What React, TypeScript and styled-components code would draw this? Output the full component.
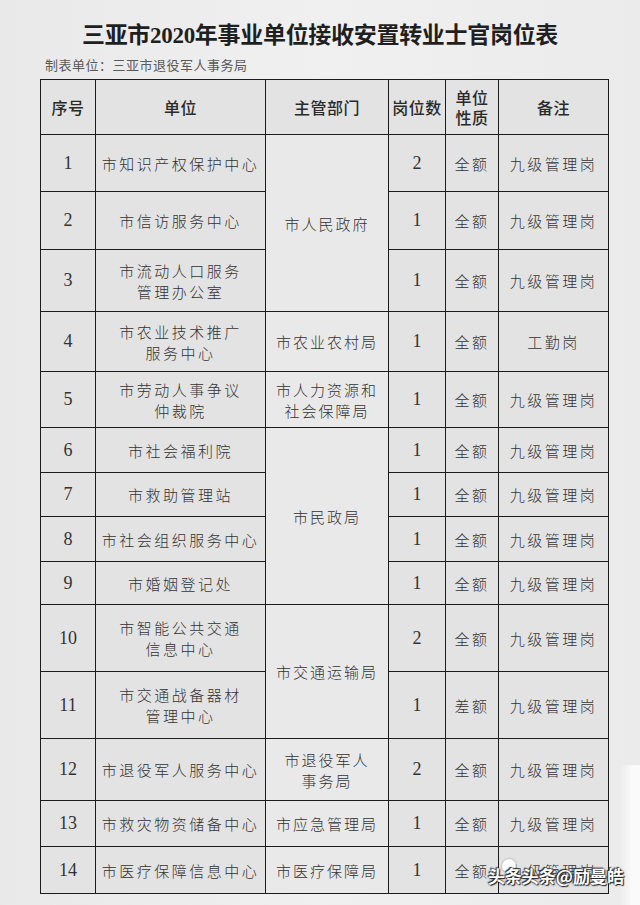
import styled, { createGlobalStyle } from "styled-components"

const GlobalStyle = createGlobalStyle`
  html, body {
    margin: 0;
    padding: 0;
    background: #ededed;
  }
`

const Page = styled.div`
  position: relative;
  width: 640px;
  height: 905px;
  overflow: hidden;
  background: linear-gradient(90deg, #e9e9e9 0%, #f0f0f0 50%, #ebebeb 100%);
  font-family: "Liberation Serif", "Noto Sans CJK SC", serif;
  color: #2b2b2b;
  padding-top: 21px;
  box-sizing: border-box;
`

const Title = styled.h1`
  margin: 0;
  text-align: center;
  font-size: 23px;
  line-height: 30px;
  font-weight: 700;
  color: #1f1f1f;
  letter-spacing: -0.3px;
`

const Subtitle = styled.div`
  margin: 5px 0 0 45px;
  font-family: "Noto Sans CJK SC", sans-serif;
  font-size: 13px;
  line-height: 18px;
  color: #5a5a5a;
  letter-spacing: 0.5px;
`

const Table = styled.table`
  margin: 5px 0 0 40px;
  width: 568px;
  border-collapse: collapse;
  table-layout: fixed;
  background: #e3e3e3;
`

const Th = styled.th`
  border: 1.5px solid #1c1c1c;
  height: 54px;
  padding: 0;
  font-family: "Noto Sans CJK SC", sans-serif;
  font-weight: 500;
  font-size: 16px;
  line-height: 20px;
  color: #2a2a2a;
  text-align: center;
  letter-spacing: 0.5px;
`

const Td = styled.td<{ $num?: boolean; $h?: number }>`
  border: 1.5px solid #1c1c1c;
  padding: 0;
  height: ${(p) => (p.$h ? `${p.$h}px` : "auto")};
  text-align: center;
  vertical-align: middle;
  font-family: ${(p) =>
    p.$num ? `"Liberation Serif", serif` : `"Noto Sans CJK SC", sans-serif`};
  font-size: ${(p) => (p.$num ? "18px" : "15px")};
  font-weight: 300;
  line-height: 21px;
  letter-spacing: ${(p) => (p.$num ? "0" : "2.5px")};
  color: #333;
`

const Dept = styled(Td)`
  background: #e9e9e9;
  letter-spacing: 2px;
`

const Watermark = styled.div`
  position: absolute;
  right: 16px;
  bottom: 18px;
  font-family: "Noto Sans CJK SC", sans-serif;
  font-size: 17px;
  line-height: 22px;
  font-weight: 700;
  color: #fff;
  text-shadow: 0 0 2px #222, 1px 1px 1px #222, -1px -1px 1px #333;
`

const Badge = styled.div`
  position: absolute;
  right: 124px;
  bottom: 32px;
  width: 14px;
  height: 14px;
  border-radius: 50%;
  background: rgba(255, 255, 255, 0.9);
  box-shadow: 0 0 2px #777;
`

const Glare = styled.div`
  position: absolute;
  right: 0;
  bottom: 0;
  width: 20px;
  height: 140px;
  background: linear-gradient(90deg, rgba(255, 255, 255, 0) 0%, #fafafa 60%);
`

type Row = {
  no: string
  unit: string[]
  dept?: { lines: string[]; span: number }
  count: string
  kind: string
  note: string
  h: number
}

const rows: Row[] = [
  { no: "1", unit: ["市知识产权保护中心"], dept: { lines: ["市人民政府"], span: 3 }, count: "2", kind: "全额", note: "九级管理岗", h: 56 },
  { no: "2", unit: ["市信访服务中心"], count: "1", kind: "全额", note: "九级管理岗", h: 57 },
  { no: "3", unit: ["市流动人口服务", "管理办公室"], count: "1", kind: "全额", note: "九级管理岗", h: 61 },
  { no: "4", unit: ["市农业技术推广", "服务中心"], dept: { lines: ["市农业农村局"], span: 1 }, count: "1", kind: "全额", note: "工勤岗", h: 59 },
  { no: "5", unit: ["市劳动人事争议", "仲裁院"], dept: { lines: ["市人力资源和", "社会保障局"], span: 1 }, count: "1", kind: "全额", note: "九级管理岗", h: 55 },
  { no: "6", unit: ["市社会福利院"], dept: { lines: ["市民政局"], span: 4 }, count: "1", kind: "全额", note: "九级管理岗", h: 44 },
  { no: "7", unit: ["市救助管理站"], count: "1", kind: "全额", note: "九级管理岗", h: 43 },
  { no: "8", unit: ["市社会组织服务中心"], count: "1", kind: "全额", note: "九级管理岗", h: 44 },
  { no: "9", unit: ["市婚姻登记处"], count: "1", kind: "全额", note: "九级管理岗", h: 42 },
  { no: "10", unit: ["市智能公共交通", "信息中心"], dept: { lines: ["市交通运输局"], span: 2 }, count: "2", kind: "全额", note: "九级管理岗", h: 66 },
  { no: "11", unit: ["市交通战备器材", "管理中心"], count: "1", kind: "差额", note: "九级管理岗", h: 66 },
  { no: "12", unit: ["市退役军人服务中心"], dept: { lines: ["市退役军人", "事务局"], span: 1 }, count: "2", kind: "全额", note: "九级管理岗", h: 61 },
  { no: "13", unit: ["市救灾物资储备中心"], dept: { lines: ["市应急管理局"], span: 1 }, count: "1", kind: "全额", note: "九级管理岗", h: 45 },
  { no: "14", unit: ["市医疗保障信息中心"], dept: { lines: ["市医疗保障局"], span: 1 }, count: "1", kind: "全额", note: "九级管理岗", h: 46 },
]

const Lines = ({ lines }: { lines: string[] }) => (
  <>
    {lines.map((l, i) => (
      <div key={i}>{l}</div>
    ))}
  </>
)

export default function App() {
  return (
    <Page>
      <GlobalStyle />
      <Title>三亚市2020年事业单位接收安置转业士官岗位表</Title>
      <Subtitle>制表单位：三亚市退役军人事务局</Subtitle>
      <Table>
        <colgroup>
          <col style={{ width: 55 }} />
          <col style={{ width: 170 }} />
          <col style={{ width: 123 }} />
          <col style={{ width: 57 }} />
          <col style={{ width: 53 }} />
          <col style={{ width: 110 }} />
        </colgroup>
        <thead>
          <tr>
            <Th>序号</Th>
            <Th>单位</Th>
            <Th>主管部门</Th>
            <Th>岗位数</Th>
            <Th>
              <Lines lines={["单位", "性质"]} />
            </Th>
            <Th>备注</Th>
          </tr>
        </thead>
        <tbody>
          {rows.map((r) => (
            <tr key={r.no}>
              <Td $num $h={r.h}>{r.no}</Td>
              <Td>
                <Lines lines={r.unit} />
              </Td>
              {r.dept && (
                <Dept rowSpan={r.dept.span}>
                  <Lines lines={r.dept.lines} />
                </Dept>
              )}
              <Td $num>{r.count}</Td>
              <Td>{r.kind}</Td>
              <Td>{r.note}</Td>
            </tr>
          ))}
        </tbody>
      </Table>
      <Glare />
      <Badge />
      <Watermark>头条头条@励曼皓</Watermark>
    </Page>
  )
}
